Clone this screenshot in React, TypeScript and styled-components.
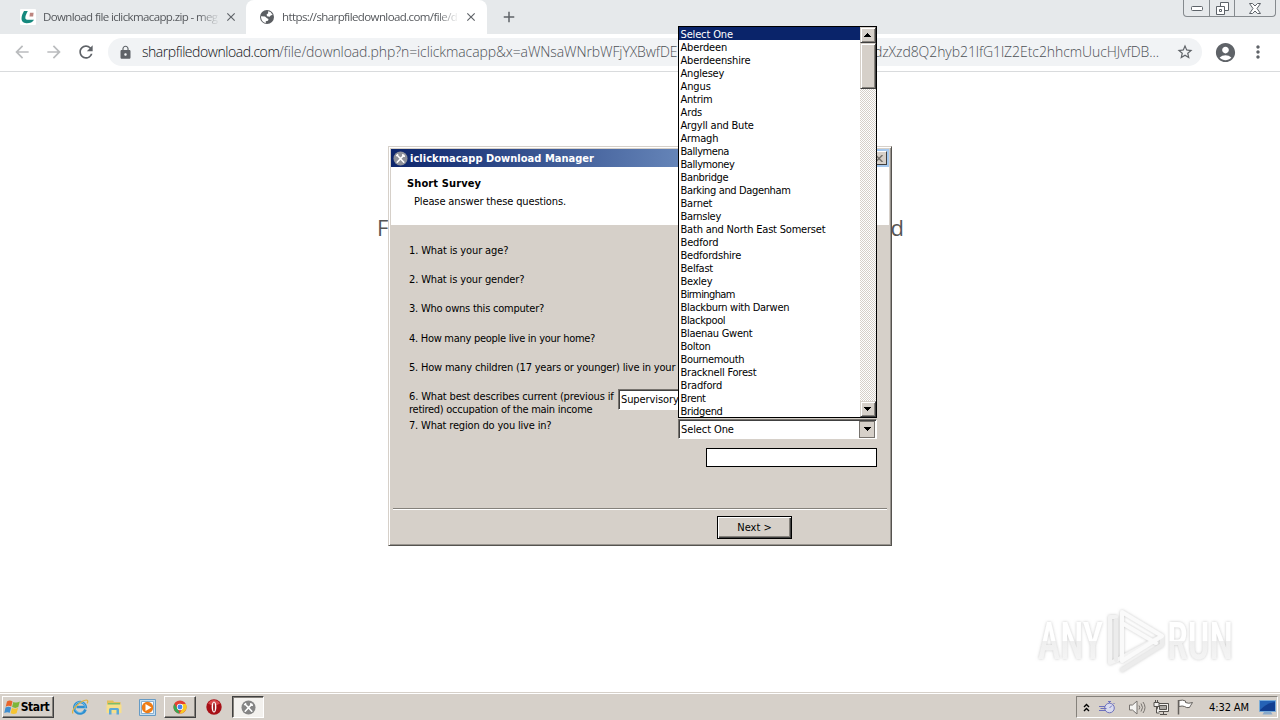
import styled, { createGlobalStyle } from 'styled-components';
import { MdAccountCircle, MdAdd, MdArrowBack, MdArrowForward, MdClose, MdLock, MdMoreVert, MdRefresh, MdStarBorder } from 'react-icons/md';

interface TextProps {
  readonly $track?: number
}

const ui = '"DejaVu Sans Condensed", "DejaVu Sans", sans-serif';
const face = '#d6d0c9';

const GlobalStyle = createGlobalStyle`
  * { box-sizing: border-box; }
  body {
    margin: 0;
    overflow: hidden;
    background: white;
    font-family: ${ui};
    font-stretch: condensed;
    font-size: 11px;
    line-height: 13px;
    color: black;
  }
  svg { display: block; flex: none; }
`;

const Screen = styled.div`
  position: relative;
  display: flex;
  flex-direction: column;
  width: 1280px;
  height: 720px;
  overflow: hidden;
`;

/* browser */

const TabStrip = styled.div`
  display: flex;
  justify-content: space-between;
  height: 34px;
  background: #e6e9eb;
`;

const Tabs = styled.div`
  display: flex;
  align-items: center;
  color: #5f6368;
`;

const Tab = styled.div<{ $active?: boolean }>`
  display: flex;
  align-items: center;
  width: ${({ $active }) => ($active ? 241 : 246)}px;
  height: 34px;
  padding: 0 ${({ $active }) => ($active ? '9px 0 13px' : '8px 0 20px')};
  border-radius: 8px 8px 0 0;
  background: ${({ $active }) => ($active ? 'white' : 'transparent')};
`;

const TabTitle = styled.div<TextProps>`
  width: 177px;
  margin: 0 5px 0 7px;
  white-space: nowrap;
  font: 11.5px/18px "Open Sans", sans-serif;
  letter-spacing: ${({ $track = 0 }) => $track}px;
  color: #55585c;
  mask-image: linear-gradient(90deg, black 155px, transparent 177px);
`;

const NewTab = styled.div`
  margin-left: 13px;
`;

const WindowControls = styled.div`
  display: flex;
  width: 93px;
  height: 17px;
  margin-right: 4px;
  border: 1px solid #858a8e;
  border-top: 0;
  border-radius: 0 0 4px 4px;
`;

const WindowControl = styled.div<{ $width: number }>`
  display: flex;
  align-items: center;
  justify-content: center;
  width: ${({ $width }) => $width}px;
  & + & { border-left: 1px solid #858a8e; }
`;

const Toolbar = styled.div`
  display: flex;
  align-items: center;
  height: 38px;
  padding: 0 12px 1px;
  border-bottom: 1px solid #d9dbdd;
  background: white;
  color: #5f6368;
`;

const NavButtons = styled.div`
  display: flex;
  gap: 12px;
  width: 96px;
`;

const Omnibox = styled.div`
  display: flex;
  align-items: center;
  width: 1095px;
  height: 28px;
  padding: 0 8px 0 10px;
  border-radius: 14px;
  background: #f1f3f5;
`;

const Url = styled.div`
  display: flex;
  flex: 1;
  margin-left: 9px;
  font: 300 14px/20px "Open Sans", sans-serif;
  white-space: nowrap;
`;

const UrlPart = styled.span<{ $width: number, $track: number, $dark?: boolean }>`
  width: ${({ $width }) => $width}px;
  letter-spacing: ${({ $track }) => $track}px;
  color: ${({ $dark }) => ($dark ? '#101114' : '#4d5156')};
`;

const ToolbarEnd = styled.div`
  display: flex;
  align-items: center;
  gap: 11px;
  margin-left: 12px;
`;

const Page = styled.main`
  flex: 1;
  background: white;
`;

const Heading = styled.h1`
  display: flex;
  justify-content: space-between;
  width: 527px;
  margin: 140px 0 0 377px;
  font: 22px/30px "Open Sans", sans-serif;
  color: #555;
`;

/* survey dialog */

const Dialog = styled.section`
  position: absolute;
  left: 388px;
  top: 146px;
  display: flex;
  flex-direction: column;
  width: 504px;
  height: 400px;
  padding: 1px;
  border: 1px solid;
  border-color: ${face} #55534f #55534f ${face};
  box-shadow: inset 1px 1px white, inset -1px -1px #98948e;
  background: ${face};
`;

const TitleBar = styled.header`
  display: flex;
  align-items: center;
  justify-content: space-between;
  height: 18px;
  margin: 1px 1px 0;
  padding: 0 2px 0 2px;
  background: linear-gradient(90deg, #0c256b, #a6caf0);
  color: white;
  font-weight: bold;
`;

const TitleText = styled.div`
  display: flex;
  align-items: center;
  gap: 2px;
  letter-spacing: 0.03px;
`;

const CloseBox = styled.div`
  display: flex;
  align-items: center;
  justify-content: center;
  width: 16px;
  height: 14px;
  border: 1px solid;
  border-color: white #404040 #404040 white;
  background: ${face};
`;

const SurveyHeader = styled.div`
  height: 58px;
  margin: 0 1px;
  padding: 10px 16px;
  background: white;
`;

const SurveyTitle = styled.div`
  font-weight: bold;
  letter-spacing: 0.12px;
`;

const SurveyHint = styled.div`
  margin: 5px 0 0 7px;
  letter-spacing: -0.13px;
`;

const Questions = styled.ol`
  display: flex;
  flex-direction: column;
  height: 284px;
  margin: 0 3px;
  padding: 19px 0 0 16px;
  list-style: none;
  border-bottom: 1px solid #85817b;
  box-shadow: 0 1px white;
`;

const Question = styled.li<TextProps>`
  flex: none;
  display: flex;
  height: 29.2px;
  white-space: pre;
  letter-spacing: ${({ $track = -0.1 }) => $track}px;
`;

const QuestionText = styled.div`
  width: 206px;
`;

const QuestionLine = styled.div<TextProps>`
  letter-spacing: ${({ $track = 0 }) => $track}px;
`;

const Select = styled.div<{ $width: number }>`
  display: flex;
  align-items: center;
  justify-content: space-between;
  flex: none;
  width: ${({ $width }) => $width}px;
  height: 20px;
  padding: 1px 1px 1px 2px;
  border: 1px solid;
  border-color: #77736e white white #77736e;
  box-shadow: inset 1px 1px #404040;
  background: white;
  letter-spacing: -0.1px;
`;

const Occupation = styled(Select)`
  height: 21px;
  margin: -1px 0 0 3px;
`;

const Answers = styled.div`
  position: absolute;
  left: 678px;
  top: 419px;
  display: flex;
  flex-direction: column;
  align-items: flex-end;
  gap: 9px;
  width: 199px;
`;

const PostcodeInput = styled.div`
  width: 171px;
  height: 19px;
  border: 1px solid black;
  background: white;
`;

const DialogFooter = styled.footer`
  display: flex;
  justify-content: flex-end;
  padding: 7px 98px 0 0;
`;

const NextButton = styled.div`
  width: 75px;
  height: 23px;
  padding: 4px 0 0;
  border: 1px solid black;
  box-shadow: inset 1px 1px white, inset -1px -1px #404040, inset -2px -2px #85817b;
  text-align: center;
`;

/* open region list */

const RegionList = styled.div`
  position: absolute;
  left: 678px;
  top: 26px;
  display: flex;
  width: 199px;
  height: 392px;
  border: 1px solid black;
  background: white;
`;

const Options = styled.div`
  flex: 1;
`;

const Option = styled.div<{ $selected?: boolean, $track?: number }>`
  height: 13px;
  padding-left: 1.5px;
  line-height: 15px;
  white-space: nowrap;
  letter-spacing: ${({ $track = -0.15 }) => $track}px;
  color: ${({ $selected }) => ($selected ? 'white' : 'black')};
  background: ${({ $selected }) => ($selected ? '#0a246a' : 'transparent')};
`;

const ScrollBar = styled.div`
  display: flex;
  flex-direction: column;
  width: 16px;
  background: repeating-conic-gradient(${face} 0 25%, white 0 50%) 0 0 / 2px 2px;
`;

const Raised = styled.div<{ $height: number, $bottom?: boolean }>`
  display: flex;
  align-items: center;
  justify-content: center;
  width: 16px;
  height: ${({ $height }) => $height}px;
  margin-top: ${({ $bottom }) => ($bottom ? 'auto' : 0)};
  padding-right: 1px;
  border: 1px solid;
  border-color: ${face} #404040 #404040 ${face};
  box-shadow: inset 1px 1px white, inset -1px -1px #85817b;
  background: ${face};
`;

const FlatArrow = styled.div`
  display: flex;
  align-items: center;
  justify-content: center;
  width: 16px;
  height: 17px;
  border: 1px solid #77736e;
  background: ${face};
`;

/* taskbar */

const TaskBar = styled.footer`
  display: flex;
  align-items: center;
  justify-content: space-between;
  height: 28px;
  padding: 1px 2px 0 1px;
  border-top: 1px solid ${face};
  box-shadow: inset 0 1px white;
  background: ${face};
`;

const Launcher = styled.div`
  display: flex;
  align-items: center;
`;

const TaskButton = styled.div<{ $width: number, $pressed?: boolean }>`
  display: flex;
  align-items: center;
  justify-content: center;
  width: ${({ $width }) => $width}px;
  height: 22px;
  border: 1px solid;
  border-color: ${({ $pressed }) => ($pressed ? '#404040 white white #404040' : 'white #404040 #404040 white')};
  box-shadow: ${({ $pressed }) => ($pressed ? 'inset 1px 1px #85817b' : 'inset -1px -1px #85817b')};
  background: ${({ $pressed }) => ($pressed ? '#f3f1ee' : face)};
`;

const StartButton = styled(TaskButton)`
  margin: 0 9px 0 1px;
  padding-right: 3px;
  font-size: 12px;
  font-weight: bold;
  letter-spacing: -0.4px;
`;

const QuickIcon = styled.div<{ $width?: number }>`
  display: flex;
  justify-content: center;
  width: ${({ $width = 34 }) => $width}px;
`;

const Tray = styled.div`
  display: flex;
  align-items: center;
  width: 202px;
  height: 22px;
  padding-left: 6px;
  border: 1px solid;
  border-color: #85817b white white #85817b;
`;

const TrayIcon = styled.div<{ $width: number }>`
  width: ${({ $width }) => $width}px;
`;

const Clock = styled.div`
  width: 50px;
  letter-spacing: -0.1px;
  white-space: nowrap;
`;

const Watermark = styled.svg`
  position: absolute;
  left: 1030px;
  top: 600px;
`;

const regions: Array<[string, number?]> = [
  ['Select One'], ['Aberdeen'], ['Aberdeenshire'], ['Anglesey', -0.2], ['Angus', -0.1], ['Antrim', -0.25], ['Ards', -0.1],
  ['Argyll and Bute', -0.2], ['Armagh', -0.2], ['Ballymena', -0.42], ['Ballymoney', -0.42], ['Banbridge', -0.35],
  ['Barking and Dagenham', -0.36], ['Barnet', -0.2], ['Barnsley', -0.3], ['Bath and North East Somerset', -0.2],
  ['Bedford'], ['Bedfordshire', -0.2], ['Belfast', -0.25], ['Bexley', -0.25], ['Birmingham', -0.6],
  ['Blackburn with Darwen', -0.3], ['Blackpool', -0.35], ['Blaenau Gwent', -0.28], ['Bolton', -0.3], ['Bournemouth', -0.35],
  ['Bracknell Forest', -0.22], ['Bradford', -0.15], ['Brent', -0.35], ['Bridgend', -0.35],
];

const questions: Array<[string, number]> = [
  ['1. What is your age?', -0.13],
  ['2. What is your gender?', -0.14],
  ['3. Who owns this computer?', -0.22],
  ['4. How many people live in your home?', -0.28],
  ['5. How many children (17 years or younger) live in your', -0.2],
];

const Arrow = ({ up = false }: { up?: boolean }): JSX.Element => (
  <svg width="7" height="4" viewBox="0 0 7 4" shapeRendering="crispEdges">
    <path d={up ? 'M3 0h1v1h1v1h1v1h1v1H0V3h1V2h1V1h1z' : 'M0 0h7v1H6v1H5v1H4v1H3V3H2V2H1V1H0z'} />
  </svg>
);

const ToolsIcon = ({ size, disc }: { size: number, disc: string }): JSX.Element => (
  <svg width={size} height={size} viewBox="0 0 16 16">
    <circle cx="8" cy="8" r="7.5" fill={disc} />
    <path d="M4.5 4.5l7 7.5M11.5 4.5l-7 7.5" stroke="white" strokeWidth="1.7" strokeLinecap="round" />
    <path d="M3.4 5.5l2-2M10.2 3.4l.4 2 2.2.2" stroke="white" strokeWidth="1.4" fill="none" />
  </svg>
);

const MegaIcon = (): JSX.Element => (
  <svg width="16" height="16" viewBox="0 0 16 16">
    <rect width="16" height="16" rx="1" fill="white" />
    <path d="M4 2h3.800C6.400 4.500 4.800 7.800 5.500 9.700c.7 1.500 4.500 1.200 8.500 1-1 2.500-4.500 3.600-7.500 3.500C-.2 14 .8 7.500 4 2z" fill="#16897e" />
    <path d="M10 3.800h3.600l-.5 3.700H9.500z" fill="#bd8580" />
  </svg>
);

const GlobeIcon = (): JSX.Element => (
  <svg width="16" height="16" viewBox="0 0 16 16">
    <circle cx="8" cy="8" r="7" fill="#5b5e62" />
    <path d="M9 2.200l2.500.8 2.200 3-1.700.3-1.400 1.500L8 7.300 7.600 5.500l1.600-1.200z" fill="white" />
    <path d="M2 7.300l4 .2 2 1.700 1.500.8-.5 1.700-2.200.6v1.800C4.200 13.700 1.900 11 2 7.300z" fill="white" />
  </svg>
);

const FlagIcon = (): JSX.Element => (
  <svg width="17" height="17" viewBox="0 0 17 17">
    <path d="M3 2.500C5 1 7 1.500 8.500 2.400L7.300 7.600C5.500 6.600 3.600 6.600 1.700 7.800z" fill="#e8652c" />
    <path d="M9.300 2.900c2.200 1 4.200.9 6.500-.3l-1.500 5.500c-2 1.100-4.200 1-6.200 0z" fill="#7db63a" />
    <path d="M1.500 8.600c2-1.200 3.900-1.100 5.600-.1L5.800 13.800C4 12.800 2.100 13 .3 14z" fill="#3f8ed0" />
    <path d="M7.900 8.900c2 1 4.100 1 6.200-.1l-1.500 5.500c-2 1-4 .9-6 0z" fill="#f6c431" />
  </svg>
);

const ExplorerIcon = (): JSX.Element => (
  <svg width="18" height="18" viewBox="0 0 18 18" fill="none">
    <path d="M14.500 11.500A5.700 5.700 0 1 1 14.700 9H5.500" stroke="#2e8fd0" strokeWidth="2.600" />
    <path d="M14.200 10.300a5.300 5.300 0 1 0-2 3.200" stroke="#7fc8ee" strokeWidth=".8" />
    <path d="M2 15.500C-.5 12 10 2.200 15.500 2c2 .1 1.300 2.200.6 3.400" stroke="#e0b33f" strokeWidth="1.200" />
  </svg>
);

const FolderIcon = (): JSX.Element => (
  <svg width="18" height="18" viewBox="0 0 18 18">
    <path d="M2 2.500h6l1 1.500h6.500v10H2z" fill="#e3bf5c" />
    <path d="M3 5h12v3H3z" fill="#7ebd69" />
    <path d="M1.500 6.500h15V15h-15z" fill="#f7df8b" />
    <path d="M4 16.500v-5q0-1.500 1.500-1.500h7q1.500 0 1.500 1.500v5h-2.500V12h-5v4.500z" fill="#5ba9d6" />
  </svg>
);

const PlayerIcon = (): JSX.Element => (
  <svg width="17" height="17" viewBox="0 0 17 17">
    <path d="M.5.500h16v16H.500z" fill="#c9dff0" stroke="#669bc5" />
    <path d="M2.500 2.500h12v12h-12z" fill="#fff" stroke="#87afd0" />
    <circle cx="8.500" cy="8.500" r="5.700" fill="#ee7c16" />
    <path d="M6.500 5l6 3.500-6 3.500z" fill="white" />
  </svg>
);

const ChromeIcon = (): JSX.Element => (
  <svg width="14" height="14" viewBox="0 0 16 16">
    <circle cx="8" cy="8" r="7.500" fill="#e34133" />
    <path d="M1.500 4.250L6 11.500 7.500 15.500A7.500 7.500 0 0 1 1.500 4.250z" fill="#36a852" />
    <path d="M8 4.500h6.700A7.500 7.500 0 0 1 7.500 15.500L11 9.500z" fill="#f9c922" />
    <circle cx="8" cy="8" r="3.600" fill="white" />
    <circle cx="8" cy="8" r="2.800" fill="#4384ee" />
  </svg>
);

const OperaIcon = (): JSX.Element => (
  <svg width="16" height="16" viewBox="0 0 16 16">
    <circle cx="8" cy="8" r="7.700" fill="#a71017" />
    <path d="M2 4.500a7 7 0 0 1 12 0q-6 4-12 0z" fill="#d8474a" />
    <ellipse cx="8" cy="8" rx="2.400" ry="5.500" fill="white" />
    <ellipse cx="8" cy="8" rx=".9" ry="4.500" fill="#9c1016" />
  </svg>
);

const AnyRunMark = (): JSX.Element => (
  <Watermark width="240" height="80" viewBox="0 0 240 80">
    <defs>
      <filter id="glow" x="-10%" y="-20%" width="120%" height="140%">
        <feDropShadow dx="0" dy="0" stdDeviation="1.500" floodColor="#999" floodOpacity=".55" />
      </filter>
      <linearGradient id="fade" x1="0" y1="20" x2="0" y2="62" gradientUnits="userSpaceOnUse">
        <stop offset=".5" stopColor="#fff" />
        <stop offset=".5" stopColor="#efefef" />
        <stop offset="1" stopColor="#f5f5f5" />
      </linearGradient>
    </defs>
    <g filter="url(#glow)" fill="url(#fade)" fontFamily="Roboto, sans-serif" fontWeight="500" fontSize="52">
      <text x="8" y="59" textLength="65" lengthAdjust="spacingAndGlyphs">ANY</text>
      <text x="137" y="59" textLength="66" lengthAdjust="spacingAndGlyphs">RUN</text>
    </g>
    <g filter="url(#glow)" fill="none" strokeLinejoin="round" strokeLinecap="round">
      <path d="M86 17h-6v46l7-3 41-22" stroke="#f3f3f3" strokeWidth="4" />
      <path d="M86 20v40M92 70l40-25V36" stroke="#ececec" strokeWidth="4" />
      <path d="M92 54V12l40 24-40 25V23l34 20" stroke="#fafafa" strokeWidth="4" />
    </g>
  </Watermark>
);

const App = (): JSX.Element => {
  return (
    <Screen>
      <GlobalStyle />
      <TabStrip>
        <Tabs>
          <Tab>
            <MegaIcon />
            <TabTitle $track={-0.62}>Download file iclickmacapp.zip - meg</TabTitle>
            <MdClose size={14} />
          </Tab>
          <Tab $active>
            <GlobeIcon />
            <TabTitle $track={-0.6}>https://sharpfiledownload.com/file/d</TabTitle>
            <MdClose size={14} />
          </Tab>
          <NewTab><MdAdd size={18} /></NewTab>
        </Tabs>
        <WindowControls>
          <WindowControl $width={25}>
            <svg width="12" height="5" viewBox="0 0 12 5"><rect x=".5" y=".5" width="11" height="4" rx="1" fill="white" stroke="#5d6369" /></svg>
          </WindowControl>
          <WindowControl $width={25}>
            <svg width="13" height="13" viewBox="0 0 13 13" fill="white" stroke="#5d6369">
              <path d="M4.500.5h8v8h-8z" />
              <path d="M.5 4.500h8v8h-8zM3.500 7.500h2v2h-2z" />
            </svg>
          </WindowControl>
          <WindowControl $width={41}>
            <svg width="12" height="11" viewBox="0 0 12 11"><path d="M.5.500h3L6 3 8.500.5h3L8 5.500l3.500 5h-3L6 8l-2.500 2.500h-3L4 5.500z" fill="white" stroke="#5d6369" /></svg>
          </WindowControl>
        </WindowControls>
      </TabStrip>
      <Toolbar>
        <NavButtons>
          <MdArrowBack size={20} color="#babcbe" />
          <MdArrowForward size={20} color="#babcbe" />
          <MdRefresh size={20} />
        </NavButtons>
        <Omnibox>
          <MdLock size={15} />
          <Url>
            <UrlPart $width={137} $track={-0.45} $dark>sharpfiledownload.com</UrlPart>
            <UrlPart $width={595} $track={-0.1}>/file/download.php?n=iclickmacapp&amp;x=aWNsaWNrbWFjYXBwfDE</UrlPart>
            <UrlPart $width={300} $track={-0.07}>dzXzd8Q2hyb21lfG1lZ2Etc2hhcmUucHJvfDB...</UrlPart>
          </Url>
          <MdStarBorder size={18} />
        </Omnibox>
        <ToolbarEnd>
          <MdAccountCircle size={23} />
          <MdMoreVert size={20} />
        </ToolbarEnd>
      </Toolbar>
      <Page>
        <Heading><span>F</span><span>d</span></Heading>
      </Page>
      <TaskBar>
        <Launcher>
          <StartButton $width={52}><FlagIcon />Start</StartButton>
          <QuickIcon><ExplorerIcon /></QuickIcon>
          <QuickIcon $width={33}><FolderIcon /></QuickIcon>
          <QuickIcon><PlayerIcon /></QuickIcon>
          <TaskButton $width={32}><ChromeIcon /></TaskButton>
          <QuickIcon $width={36}><OperaIcon /></QuickIcon>
          <TaskButton $width={32} $pressed><ToolsIcon size={15} disc="#858585" /></TaskButton>
        </Launcher>
        <Tray>
          <TrayIcon $width={16}>
            <svg width="7" height="9" viewBox="0 0 7 9" fill="none" stroke="black" strokeWidth="1.400"><path d="M1 4l2.500-2.500L6 4M1 8l2.500-2.500L6 8" /></svg>
          </TrayIcon>
          <TrayIcon $width={30}>
            <svg width="17" height="13" viewBox="0 0 17 13" fill="none" stroke="#6d70bd">
              <circle cx="10.500" cy="7" r="4.800" fill="#d9dbee" />
              <path d="M10.500 2V.5M9 .5h3M10.500 7l2.500-2.500M14.500 3l1-1M0 5.500h6M1.500 7.500h6M0 9.500h6" />
            </svg>
          </TrayIcon>
          <TrayIcon $width={24}>
            <svg width="17" height="15" viewBox="0 0 17 15" fill="none" stroke="#77736f">
              <path d="M.500 5h3L8 1v13L3.500 10h-3z" fill="#f5f4f2" />
              <path d="M10 5.500q1.500 2 0 4M12 3.500q3 4 0 8M14 2q4 5.500 0 11" />
            </svg>
          </TrayIcon>
          <TrayIcon $width={24}>
            <svg width="17" height="17" viewBox="0 0 17 17" fill="#f2f0ed" stroke="#55524e">
              <path d="M4.500 4.500h11v8h-11z" />
              <path d="M6.500 6.500h7v4h-7z" fill="#aaa7a2" />
              <path d="M7 15.500h7M10.500 13v2" />
              <path d="M1 3.500h5v4H1zM2.500 1v2M4.500 1v2M3.500 8v6h3" />
            </svg>
          </TrayIcon>
          <TrayIcon $width={32}>
            <svg width="17" height="16" viewBox="0 0 17 16" fill="white" stroke="#65615d">
              <path d="M1.500 1v14.500" strokeWidth="1.500" />
              <path d="M2 1.500q4-1 6.500.5v1.500q3 1.500 7 0-2 3-3 5-3 .7-5-1-2-1-5.500 0z" />
            </svg>
          </TrayIcon>
          <Clock>4:32 AM</Clock>
          <svg width="17" height="15" viewBox="0 0 17 15">
            <path d="M.5.500h16v11H.500z" fill="#2563b6" stroke="#7badd9" />
            <path d="M1 10q7-7 15-8v9H1z" fill="#123f91" />
            <path d="M5 12h7l1.500 2.500h-10z" fill="#8aa9ca" />
          </svg>
        </Tray>
      </TaskBar>

      <AnyRunMark />

      <Dialog>
        <TitleBar>
          <TitleText><ToolsIcon size={15} disc="#8e9199" />iclickmacapp Download Manager</TitleText>
          <CloseBox>
            <svg width="8" height="7" viewBox="0 0 8 7"><path d="M.5 0l7 7M7.500 0l-7 7" stroke="#77736e" strokeWidth="1.500" /></svg>
          </CloseBox>
        </TitleBar>
        <SurveyHeader>
          <SurveyTitle>Short Survey</SurveyTitle>
          <SurveyHint>Please answer these questions.</SurveyHint>
        </SurveyHeader>
        <Questions>
          {questions.map(([text, track]) => <Question key={text} $track={track}>{text}</Question>)}
          <Question>
            <QuestionText>
              <QuestionLine $track={-0.15}>6. What best describes current (previous if</QuestionLine>
              <QuestionLine $track={-0.27}>retired) occupation of the main income</QuestionLine>
            </QuestionText>
            <Occupation $width={80}>Supervisory</Occupation>
          </Question>
          <Question $track={-0.18}>7. What region do you live in?</Question>
        </Questions>
        <DialogFooter>
          <NextButton>Next &gt;</NextButton>
        </DialogFooter>
      </Dialog>

      <Answers>
        <Select $width={199}>Select One<FlatArrow><Arrow /></FlatArrow></Select>
        <PostcodeInput />
      </Answers>

      <RegionList>
        <Options>
          {regions.map(([name, track], i) => <Option key={name} $selected={i === 0} $track={track}>{name}</Option>)}
        </Options>
        <ScrollBar>
          <Raised $height={16}><Arrow up /></Raised>
          <Raised $height={46} />
          <Raised $height={16} $bottom><Arrow /></Raised>
        </ScrollBar>
      </RegionList>
    </Screen>
  );
};

export default App;
